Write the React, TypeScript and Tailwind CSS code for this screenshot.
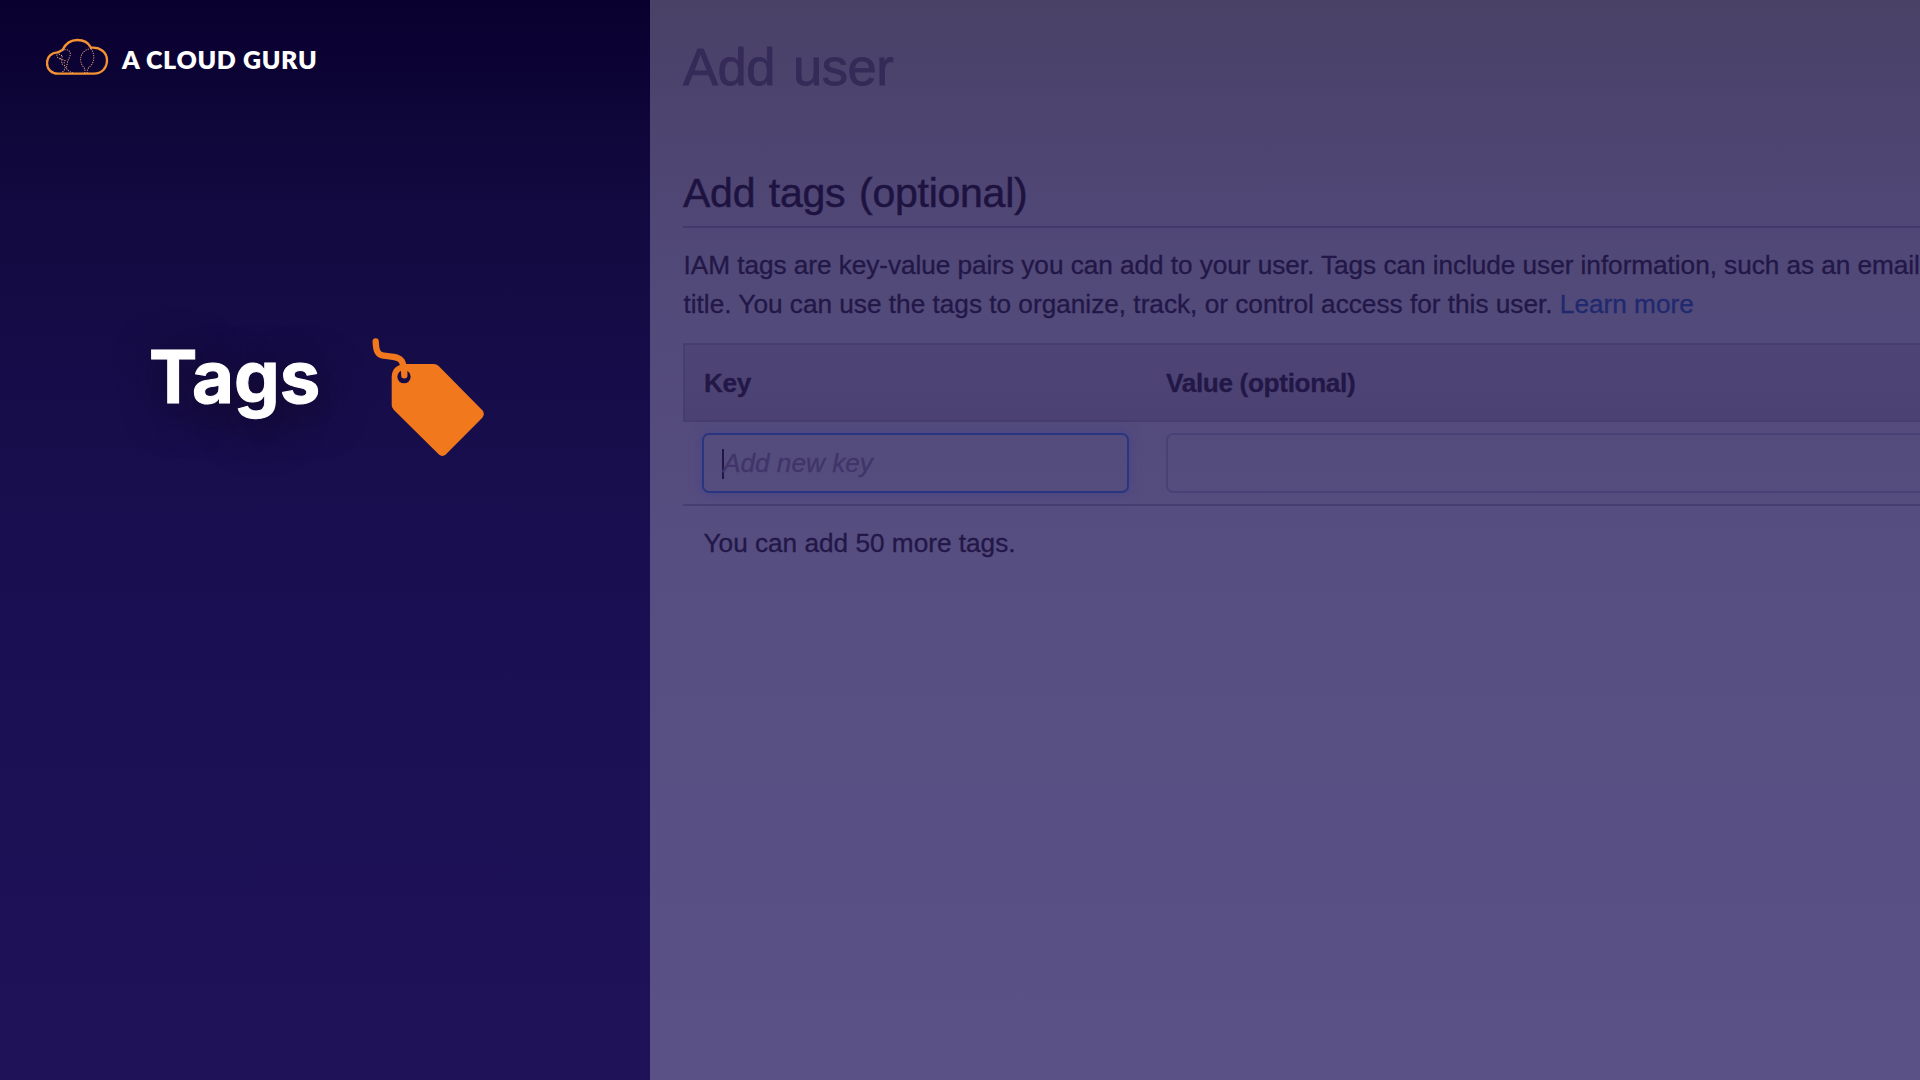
function CloudLogo() {
  return (
    <svg className="h-10 w-16 shrink-0" viewBox="48 51 192 120" fill="none" stroke="#f39333" strokeLinecap="round">
      <path
        d="M84 161 C64 161 51 147 51 129 C51 110 65 98 82 97 C88 96 91 93 98 89 C108 69 124 60 142 60 C161 60 176 69 183 83 C211 80 231 98 231 121 C231 145 214 161 192 161 Z"
        strokeWidth="7"
        strokeLinejoin="round"
      />
      <g stroke="#e7a07c" strokeWidth="3.4" strokeDasharray="0.5 6.5">
        <path d="M98 91 C110 85 122 92 121 104 C119 114 113 119 112 130 L109 144 C112 152 121 156 128 159" />
        <path d="M84 99 C76 107 84 116 94 118 C98 125 91 130 100 134 C108 138 108 148 96 157" />
        <path d="M88 103 L98 108 L92 116 L105 122 L101 132" />
        <path d="M182 86 C162 88 151 103 152 121 C153 135 162 141 165 148 L164 158" />
        <path d="M184 87 C194 103 194 123 184 135 C178 142 172 144 171 158" />
      </g>
    </svg>
  );
}

function TagIcon() {
  return (
    <svg className="mt-px h-[122px] w-[118px] shrink-0" viewBox="750 50 354 366">
      <path
        d="M853 131 H941 Q950 131 956 137 L1087 270 Q1096 281 1087 292 L978 402 Q967 412 956 402 L821 268 Q815 262 815 254 V169 Q817 135 853 131 Z"
        fill="#f1781c"
      />
      <circle cx="852" cy="169" r="20" fill="#170c46" />
      <path
        d="M767 63 C768 88 771 103 790 106 C813 110 836 107 845 122 C852 134 853 148 853 165"
        fill="none"
        stroke="#f1781c"
        strokeWidth="19"
        strokeLinecap="round"
      />
    </svg>
  );
}

function Sidebar() {
  return (
    <aside className="flex w-[650px] shrink-0 flex-col bg-[linear-gradient(to_bottom,#09002f_0%,#130a41_20%,#180e4e_45%,#1c1055_70%,#1f1259_100%)]">
      <header className="flex h-[77px] items-end gap-[12px] pl-[46px]">
        <CloudLogo />
        <span className="pb-[3px] font-[Lato] text-[25px] leading-[30px] font-extrabold tracking-[0.66px] whitespace-nowrap text-white">
          A CLOUD GURU
        </span>
      </header>
      <div className="mt-[259px] flex items-start pl-[149px]">
        <h1 className="w-[221px] pt-px font-[Inter] text-[72.4px] leading-[80px] font-bold text-white [-webkit-text-stroke:1px_white] [text-shadow:4px_10px_44px_rgba(18,10,30,0.95)]">
          Tags
        </h1>
        <TagIcon />
      </div>
    </aside>
  );
}

function TagTable() {
  return (
    <div className="text-[26.2px]">
      <div className="grid h-[79px] grid-cols-[462px_1fr] items-center border-2 border-r-0 border-[#463d70] bg-linear-to-b from-[#4e4575] to-[#4b4273] pt-[3px] pl-[19px] font-bold tracking-[-0.35px]">
        <span>Key</span>
        <span>Value (optional)</span>
      </div>
      <div className="grid h-[84px] grid-cols-[427px_1fr] gap-x-[37px] border-b-2 border-[#463d70] pt-[11px] pl-[19px]">
        <div className="flex h-[60px] items-center rounded-[7px] border-2 border-[#293580] pt-px pl-[18px] text-[#3f3568] italic shadow-[0_0_12px_rgba(60,60,140,0.55)]">
          <span className="mr-[-1px] h-[30px] w-[2px] bg-[#211746]" />
          <span>Add new key</span>
        </div>
        <div className="h-[60px] rounded-l-[7px] border-2 border-r-0 border-[#494075]" />
      </div>
      <p className="pt-[17px] pl-[20.5px] leading-[40px]">You can add 50 more tags.</p>
    </div>
  );
}

export default function App() {
  return (
    <main className="flex h-[1080px] w-[1920px] overflow-hidden">
      <Sidebar />
      <section className="min-w-0 flex-1 overflow-hidden bg-[linear-gradient(to_bottom,#4a4167_0%,#4e4573_15%,#524a79_28%,#564d80_50%,#5a5187_100%)] pl-[33px] font-['Liberation_Sans'] text-[#221747] [-webkit-text-stroke:0.3px_currentColor]">
        <h2 className="pt-[37px] text-[52.5px] leading-[60px] tracking-[-0.5px] text-[#352b58] [word-spacing:4px] [-webkit-text-stroke:0.8px_currentColor]">
          Add user
        </h2>
        <h3 className="mt-[70px] h-[61px] border-b-2 border-[#42386b] text-[41px] leading-[53px] tracking-[-0.25px] text-[#1e1340] [word-spacing:2.5px] [-webkit-text-stroke:0.5px_currentColor]">
          Add tags (optional)
        </h3>
        <p className="mt-[18px] h-[97px] pl-[0.5px] text-[26.2px] leading-[39px] whitespace-nowrap">
          <span className="tracking-[-0.045px]">
            IAM tags are key-value pairs you can add to your user. Tags can include user information, such as an email
          </span>
          <br />
          title. You can use the tags to organize, track, or control access for this user.{" "}
          <a className="text-[#20296f]">Learn more</a>
        </p>
        <TagTable />
      </section>
    </main>
  );
}
